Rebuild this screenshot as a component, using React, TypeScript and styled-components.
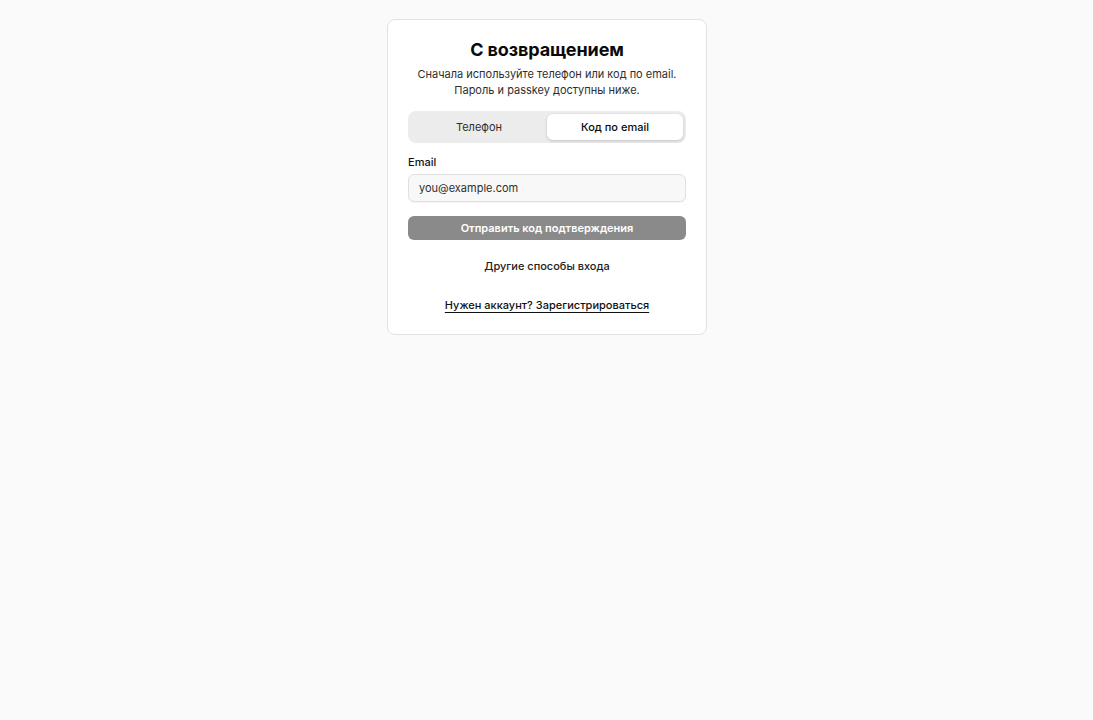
import React, { useState } from "react";
import styled, { createGlobalStyle } from "styled-components";

const GlobalStyle = createGlobalStyle`
  html, body { margin: 0; padding: 0; background: #fafafa; }
  body { font-family: Inter, "Noto Sans", "Liberation Sans", sans-serif; color: #111; -webkit-font-smoothing: antialiased; }
  * { box-sizing: border-box; }
`;

const Page = styled.main`
  min-height: 720px;
  display: flex;
  justify-content: center;
  align-items: flex-start;
  padding-top: 19px;
  padding-left: 1px;
`;

const Card = styled.section`
  width: 320px;
  background: #ffffff;
  border: 1px solid #e2e2e2;
  border-radius: 8px;
  padding: 19px 20px 20px;
  display: flex;
  flex-direction: column;
`;

const Title = styled.h1`
  margin: 0;
  font-size: 18px;
  line-height: 22px;
  font-weight: 700;
  text-align: center;
  color: #0a0a0a;
  letter-spacing: -0.1px;
`;

const Subtitle = styled.p`
  margin: 5px 0 0;
  font-size: 11px;
  line-height: 16px;
  text-align: center;
  color: #2e2e2e;
`;

const Tabs = styled.div`
  margin-top: 13px;
  display: grid;
  grid-template-columns: 1fr 1fr;
  background: #ececec;
  border-radius: 8px;
  padding: 3px;
  height: 32px;
`;

const Tab = styled.button<{ $active?: boolean }>`
  border: none;
  font: inherit;
  font-size: 11px;
  font-weight: ${(p) => (p.$active ? 500 : 400)};
  cursor: pointer;
  border-radius: 6px;
  color: ${(p) => (p.$active ? "#0a0a0a" : "#2e2e2e")};
  background: ${(p) => (p.$active ? "#ffffff" : "transparent")};
  box-shadow: ${(p) => (p.$active ? "0 1px 3px rgba(0,0,0,0.18)" : "none")};
`;

const Label = styled.label`
  margin-top: 12px;
  font-size: 11px;
  line-height: 14px;
  font-weight: 500;
  color: #111;
`;

const Input = styled.input`
  margin-top: 5px;
  height: 28px;
  border: 1px solid #e0e0e0;
  border-radius: 6px;
  background: #f8f8f8;
  padding: 0 10px;
  font: inherit;
  font-size: 11px;
  color: #111;
  box-shadow: 0 1px 1px rgba(0,0,0,0.04);
  outline: none;
  &::placeholder { color: #2e2e2e; }
`;

const Submit = styled.button`
  margin-top: 14px;
  height: 24px;
  border: none;
  border-radius: 6px;
  background: #8a8a8a;
  color: #fff;
  font: inherit;
  font-size: 11px;
  font-weight: 600;
`;

const LinkButton = styled.button`
  margin-top: 18px;
  align-self: center;
  border: none;
  background: none;
  font: inherit;
  font-size: 11px;
  font-weight: 450;
  color: #222;
  padding: 0;
  line-height: 16px;
`;

const Footer = styled.a`
  margin-top: 23px;
  margin-bottom: 1px;
  align-self: center;
  font-size: 11px;
  font-weight: 450;
  line-height: 16px;
  color: #111;
  text-decoration: underline;
  text-underline-offset: 3px;
`;

export default function App() {
  const [tab, setTab] = useState<"phone" | "email">("email");
  return (
    <>
      <GlobalStyle />
      <Page>
        <Card>
          <Title>С возвращением</Title>
          <Subtitle>
            Сначала используйте телефон или код по email.
            <br />
            Пароль и passkey доступны ниже.
          </Subtitle>
          <Tabs>
            <Tab $active={tab === "phone"} onClick={() => setTab("phone")}>Телефон</Tab>
            <Tab $active={tab === "email"} onClick={() => setTab("email")}>Код по email</Tab>
          </Tabs>
          <Label htmlFor="email">Email</Label>
          <Input id="email" placeholder="you@example.com" />
          <Submit disabled>Отправить код подтверждения</Submit>
          <LinkButton>Другие способы входа</LinkButton>
          <Footer href="#">Нужен аккаунт? Зарегистрироваться</Footer>
        </Card>
      </Page>
    </>
  );
}
